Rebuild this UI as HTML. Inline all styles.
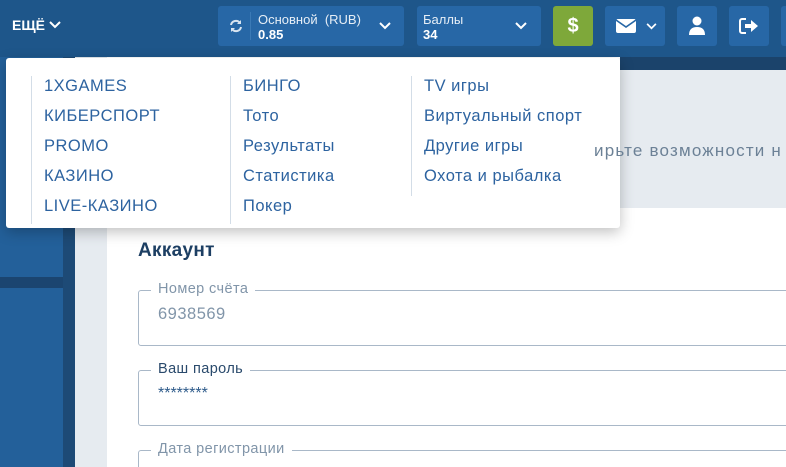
<!DOCTYPE html><html><head><meta charset="utf-8"><style>
*{margin:0;padding:0;box-sizing:border-box}
html,body{width:786px;height:467px;overflow:hidden}
body{position:relative;font-family:"Liberation Sans",Roboto,sans-serif;background:#fff}
.a{position:absolute}
.hdr{left:0;top:0;width:786px;height:57px;background:#1e568a}
.btn{background:#2767a6;border-radius:3px;height:40px;top:6px}
.lbl{color:#e6eef6;font-size:13px}
.val{color:#fff;font-size:13px;font-weight:bold}
.menu{left:6px;top:58px;width:614px;height:170px;background:#fff;border-radius:3px;box-shadow:0 4px 14px rgba(0,0,0,.25)}
.col{position:absolute;top:18px;border-left:1px solid #d3dde7;height:148px}
.col div{color:#2d63a0;font-size:16.5px;height:30px;line-height:20px;letter-spacing:.5px;white-space:nowrap}
.fld{left:138px;width:660px;height:56px;border:1px solid #a9b8c8;border-radius:3px}
.fl{position:absolute;top:-10px;left:12px;background:#fff;padding:0 7px;font-size:14.5px;color:#8195a9;letter-spacing:.4px}
</style></head><body>
<div class="a hdr"></div>
<div class="a" style="left:620px;top:57px;width:166px;height:13px;background:#1b436b"></div>
<div class="a" style="left:0;top:57px;width:63px;height:220px;background:#23609a"></div>
<div class="a" style="left:0;top:277px;width:75px;height:11px;background:#1b4570"></div>
<div class="a" style="left:0;top:288px;width:63px;height:179px;background:#23609a"></div>
<div class="a" style="left:63px;top:57px;width:12px;height:410px;background:#1d4a76"></div>
<div class="a" style="left:75px;top:57px;width:32px;height:410px;background:#e6ebf0"></div>
<div class="a" style="left:107px;top:70px;width:679px;height:138px;background:#e6ebf0"></div>
<div class="a" style="left:138px;top:240px;font-size:19px;font-weight:bold;color:#1d3f63;letter-spacing:.3px">Аккаунт</div>
<div class="a fld" style="top:290px"><span class="fl">Номер счёта</span><div style="position:absolute;left:19px;top:14px;font-size:16.5px;color:#8195a9;letter-spacing:.5px">6938569</div></div>
<div class="a fld" style="top:370px"><span class="fl" style="color:#2a4a6c">Ваш пароль</span><div style="position:absolute;left:19px;top:14px;font-size:16px;color:#2d5a8a">********</div></div>
<div class="a fld" style="top:450px;height:17px;border-bottom:none;border-radius:3px 0 0 0"><span class="fl">Дата регистрации</span></div>

<div class="a" style="left:12px;top:17px;color:#fff;font-size:14px;font-weight:bold">ЕЩЁ <svg width="12" height="8" viewBox="0 0 12 8" style="vertical-align:1px"><path d="M1 1l5 5 5-5" stroke="#fff" stroke-width="2" fill="none"/></svg></div>
<div class="a btn" style="left:218px;width:186px"><svg class="a" style="left:11px;top:13px" width="14" height="14" viewBox="0 0 14 14"><path d="M2 6a5 5 0 0 1 9-2M12 8a5 5 0 0 1-9 2" stroke="#d8e4f0" stroke-width="2" fill="none"/><path d="M12 1v4H8zM2 13V9h4z" fill="#d8e4f0"/></svg><div class="a" style="left:32px;top:6px;width:1px;height:28px;background:#3b7ab6"></div><div class="a lbl" style="left:40px;top:6px">Основной&nbsp; (RUB)</div><div class="a val" style="left:40px;top:21px">0.85</div><svg class="a" style="left:161px;top:16px" width="12" height="8" viewBox="0 0 12 8"><path d="M1 1l5 5 5-5" stroke="#fff" stroke-width="2" fill="none"/></svg></div>
<div class="a btn" style="left:417px;width:124px"><div class="a lbl" style="left:6px;top:6px">Баллы</div><div class="a val" style="left:6px;top:21px">34</div><svg class="a" style="left:98px;top:16px" width="12" height="8" viewBox="0 0 12 8"><path d="M1 1l5 5 5-5" stroke="#fff" stroke-width="2" fill="none"/></svg></div>
<div class="a btn" style="left:553px;width:40px;background:#7ea83a;color:#fff;font-weight:bold;font-size:20px;text-align:center;line-height:40px">$</div>
<div class="a btn" style="left:605px;width:60px"><svg class="a" style="left:11px;top:13px" width="20" height="14" viewBox="0 0 20 14"><rect width="20" height="14" rx="2" fill="#fff"/><path d="M0 1l10 7 10-7" stroke="#2767a6" stroke-width="1.6" fill="none"/></svg><svg class="a" style="left:41px;top:17px" width="11" height="7" viewBox="0 0 12 8"><path d="M1 1l5 5 5-5" stroke="#fff" stroke-width="2" fill="none"/></svg></div>
<div class="a btn" style="left:677px;width:40px"><svg class="a" style="left:11px;top:10px" width="18" height="20" viewBox="0 0 18 20"><circle cx="9" cy="5" r="4.5" fill="#fff"/><path d="M1 19q0-8 8-8t8 8z" fill="#fff"/></svg></div>
<div class="a btn" style="left:729px;width:40px"><svg class="a" style="left:10px;top:12px" width="20" height="16" viewBox="0 0 20 16"><path d="M7 1H3a2 2 0 0 0-2 2v10a2 2 0 0 0 2 2h4" stroke="#fff" stroke-width="2" fill="none"/><path d="M6 6h6V2l7 6-7 6v-4H6z" fill="#fff"/></svg></div>
<div class="a btn" style="left:781px;width:5px;border-radius:3px 0 0 3px"></div>

<div class="a menu">
<div class="col" style="left:25px;padding-left:12px"><div>1XGAMES</div><div>КИБЕРСПОРТ</div><div>PROMO</div><div>КАЗИНО</div><div>LIVE-КАЗИНО</div></div>
<div class="col" style="left:224px;padding-left:12px"><div>БИНГО</div><div>Тото</div><div>Результаты</div><div>Статистика</div><div>Покер</div></div>
<div class="col" style="left:405px;padding-left:12px;height:120px"><div>TV игры</div><div>Виртуальный спорт</div><div>Другие игры</div><div>Охота и рыбалка</div></div>
</div>
<div class="a" style="left:594px;top:141px;font-size:17px;color:#6c8196;white-space:nowrap;letter-spacing:1.2px;z-index:5;overflow:hidden;width:192px">ирьте возможности н</div>
</body></html>
